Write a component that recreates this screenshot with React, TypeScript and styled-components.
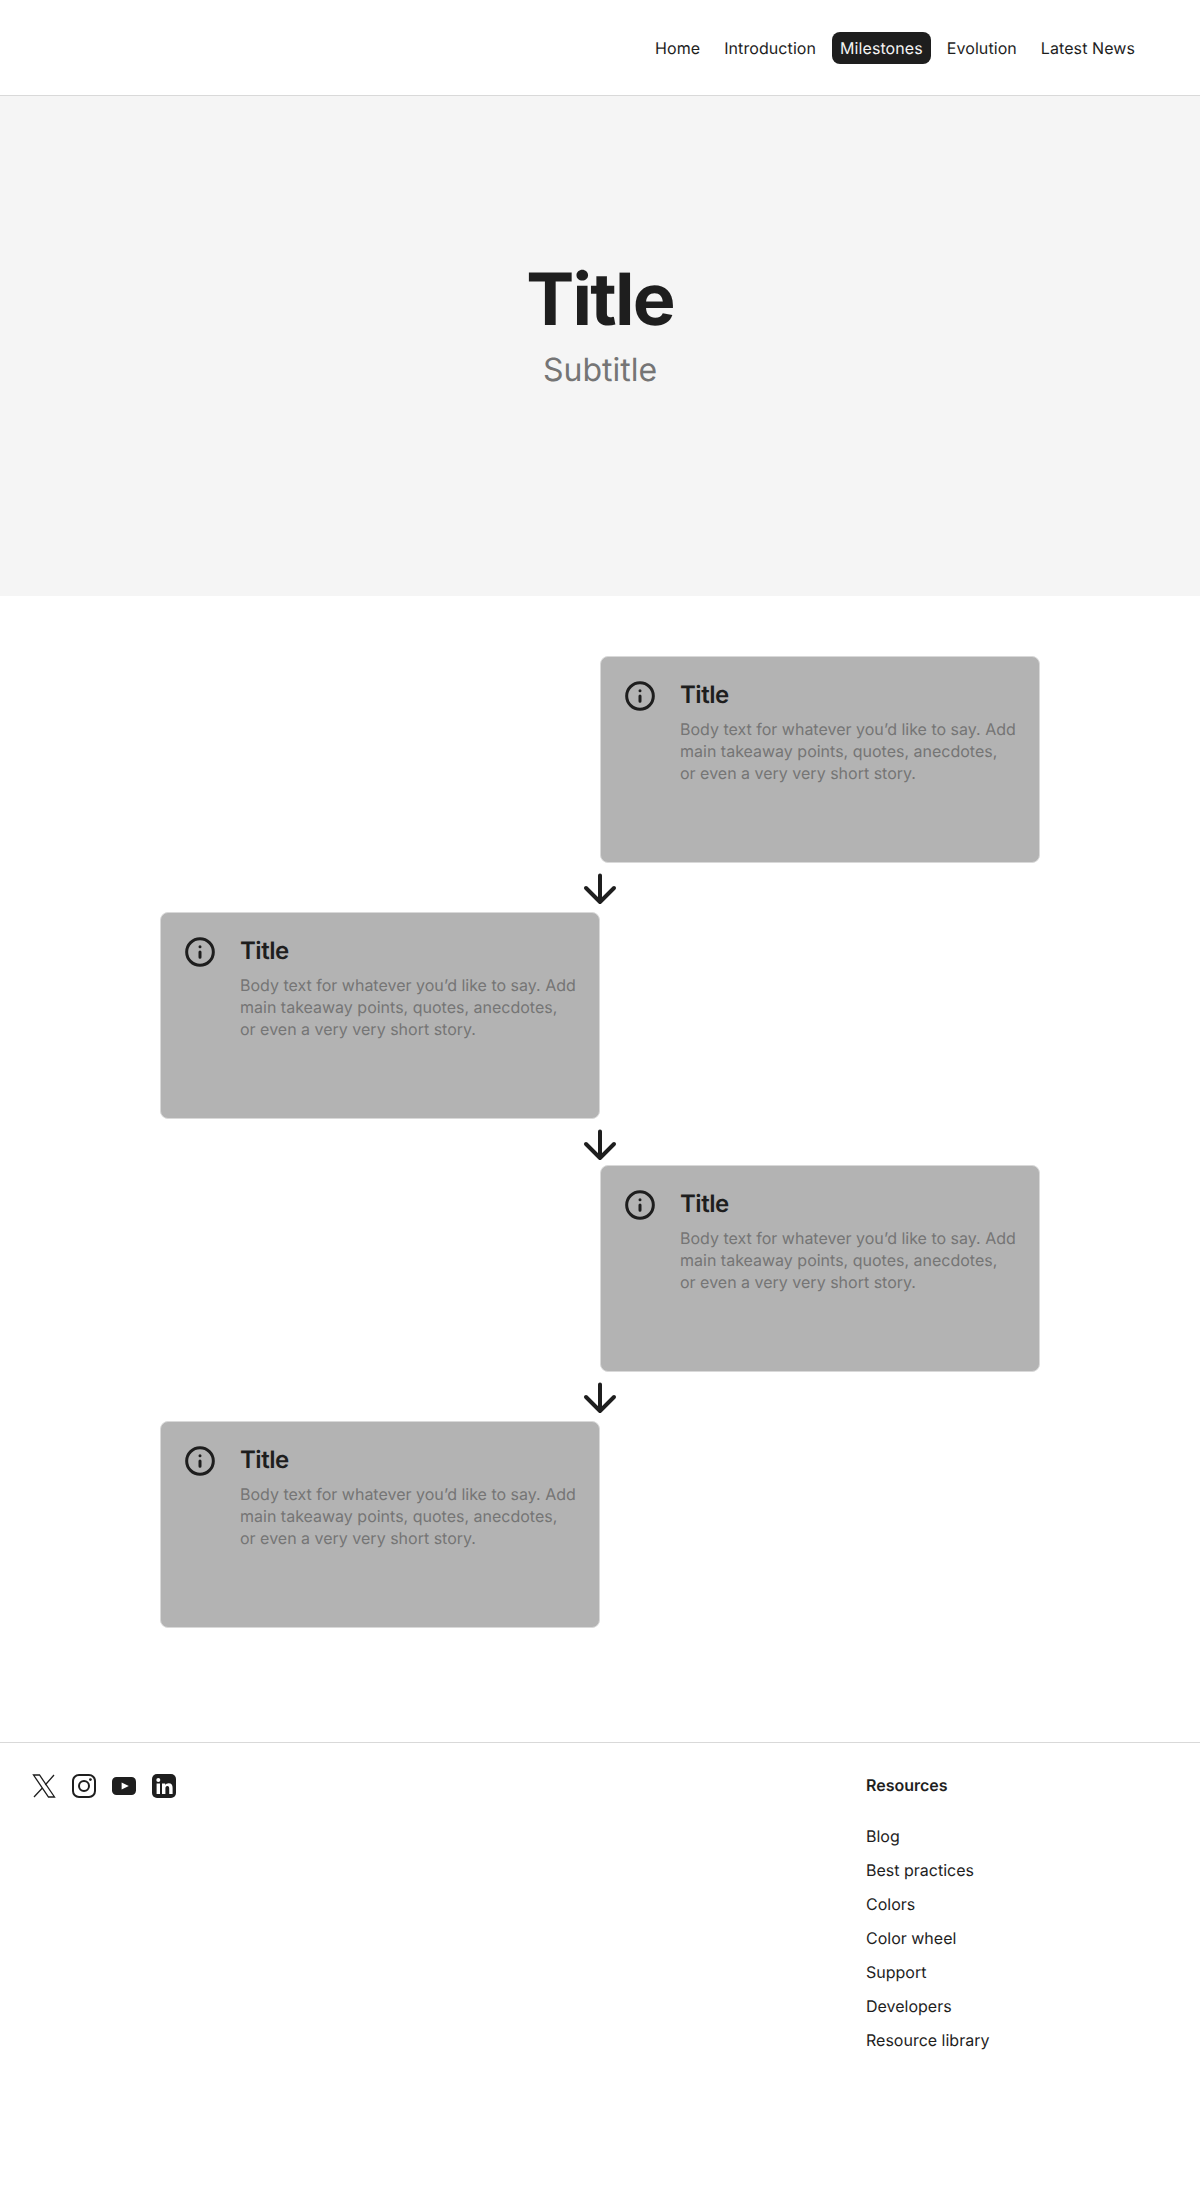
import React from "react";
import styled, { createGlobalStyle } from "styled-components";

const Global = createGlobalStyle`
  html, body { margin: 0; padding: 0; background: #fff; }
  body {
    font-family: Inter, "Liberation Sans", sans-serif;
    color: #1e1e1e;
    text-rendering: geometricPrecision;
    -webkit-font-smoothing: antialiased;
  }
  * { box-sizing: border-box; }
`;

const Page = styled.div`
  width: 1200px;
  min-height: 2210px;
  display: flex;
  flex-direction: column;
`;

const Header = styled.header`
  height: 96px;
  padding: 32px 57px 32px 32px;
  display: flex;
  justify-content: flex-end;
  align-items: flex-start;
  border-bottom: 1px solid #d9d9d9;
`;

const Nav = styled.nav`
  display: flex;
  gap: 8px;
`;

const NavLink = styled.a<{ $active?: boolean }>`
  height: 32px;
  padding: 8px;
  border-radius: 8px;
  font-size: 16px;
  line-height: 16px;
  letter-spacing: 0.08px;
  background: ${(p) => (p.$active ? "#1e1e1e" : "transparent")};
  color: ${(p) => (p.$active ? "#f5f5f5" : "#1e1e1e")};
`;

const Hero = styled.section`
  height: 500px;
  background: #f5f5f5;
  display: flex;
  flex-direction: column;
  align-items: center;
  justify-content: center;
  gap: 8px;
  padding-bottom: 46px;
`;

const HeroTitle = styled.h1`
  margin: 0;
  font-size: 72px;
  line-height: 86px;
  font-weight: 700;
  letter-spacing: -1.8px;
  color: #1e1e1e;
`;

const HeroSubtitle = styled.p`
  margin: 0;
  font-size: 32px;
  line-height: 38px;
  font-weight: 400;
  color: #757575;
`;

const Timeline = styled.section`
  padding: 60px 160px 114.5px;
  display: flex;
  flex-direction: column;
`;

const Row = styled.div<{ $right?: boolean }>`
  display: flex;
  justify-content: ${(p) => (p.$right ? "flex-end" : "flex-start")};
`;

const Card = styled.article`
  width: 440px;
  height: 206.5px;
  padding: 23px;
  display: flex;
  gap: 24px;
  background: #b3b3b3;
  border: 1px solid #d9d9d9;
  border-radius: 8px;
`;

const CardIcon = styled.svg`
  width: 32px;
  height: 32px;
  flex: none;
`;

const CardText = styled.div`
  display: flex;
  flex-direction: column;
  gap: 9px;
`;

const CardTitle = styled.h3`
  margin: 0;
  font-size: 24px;
  line-height: 29px;
  font-weight: 600;
  letter-spacing: -0.48px;
  color: #1e1e1e;
`;

const CardBody = styled.p`
  margin: 0;
  font-size: 16px;
  line-height: 22px;
  color: #757575;
`;

const ArrowWrap = styled.div<{ $gap: number }>`
  height: ${(p) => p.$gap}px;
  display: flex;
  justify-content: center;
  align-items: flex-start;
`;

const ArrowIcon = styled.svg`
  width: 48px;
  height: 48px;
  flex: none;
`;

const Footer = styled.footer`
  border-top: 1px solid #d9d9d9;
  padding: 31px 32px 32px;
  display: flex;
  justify-content: space-between;
  flex: 1;
`;

const Socials = styled.div`
  display: flex;
  gap: 16px;
  height: 24px;
`;

const SocialIcon = styled.svg`
  width: 24px;
  height: 24px;
`;

const Column = styled.div`
  width: 302px;
  display: flex;
  flex-direction: column;
  gap: 12px;
`;

const ColumnHeading = styled.div`
  font-size: 16px;
  line-height: 22px;
  font-weight: 600;
  padding-bottom: 17px;
  color: #1e1e1e;
`;

const ColumnLink = styled.a`
  font-size: 16px;
  line-height: 22px;
  color: #1e1e1e;
`;

const Info = () => (
  <CardIcon viewBox="0 0 32 32" fill="none" stroke="#1e1e1e" strokeWidth="3" strokeLinecap="round" strokeLinejoin="round">
    <circle cx="16" cy="16" r="13.33" />
    <path d="M16 21.33V16M16 10.67h.01" />
  </CardIcon>
);

const Arrow = () => (
  <ArrowIcon viewBox="0 0 48 48" fill="none" stroke="#1e1e1e" strokeWidth="4" strokeLinecap="round" strokeLinejoin="round">
    <path d="M24 12.500V39M38 25 24 39 10 25" />
  </ArrowIcon>
);

const XLogo = () => (
  <SocialIcon viewBox="0 0 24 24" fill="none" stroke="#1e1e1e" strokeWidth="1.3">
    <path d="M1.500 1h6l15 22h-6zM22 1 13.200 11M10.600 13.800 2 23" />
  </SocialIcon>
);

const Instagram = () => (
  <SocialIcon viewBox="0 0 24 24" fill="none" stroke="#1e1e1e" strokeWidth="2">
    <rect x="1" y="1" width="22" height="22" rx="6" />
    <circle cx="12" cy="12" r="5" />
    <circle cx="18.400" cy="5.600" r="1.400" fill="#1e1e1e" stroke="none" />
  </SocialIcon>
);

const YouTube = () => (
  <SocialIcon viewBox="0 0 24 24">
    <path fill="#1e1e1e" d="M4.500 3h15A4.500 4.500 0 0 1 24 7.500v9a4.500 4.500 0 0 1-4.500 4.500h-15A4.500 4.500 0 0 1 0 16.500v-9A4.500 4.500 0 0 1 4.500 3z" />
    <path fill="#fff" d="M9.600 8.400 16.800 12l-7.200 3.600z" />
  </SocialIcon>
);

const LinkedIn = () => (
  <SocialIcon viewBox="0 0 24 24">
    <rect width="24" height="24" rx="5" fill="#1e1e1e" />
    <circle cx="6.300" cy="6" r="2" fill="#fff" />
    <path fill="#fff" d="M4.600 9.500H8V20H4.600zM10 9.500h3.200v1.500c.6-1.100 1.900-1.800 3.400-1.800 3 0 4 1.900 4 4.800V20h-3.400v-5.500c0-1.400-.4-2.400-1.800-2.400s-2 1.100-2 2.500V20H10z" />
  </SocialIcon>
);

const links = ["Blog", "Best practices", "Colors", "Color wheel", "Support", "Developers", "Resource library"];
const navItems = ["Home", "Introduction", "Milestones", "Evolution", "Latest News"];
const arrowGaps = [49.5, 46.5, 49.5];

const TimelineCard = () => (
  <Card>
    <Info />
    <CardText>
      <CardTitle>Title</CardTitle>
      <CardBody>
        Body text for whatever you’d like to say. Add main takeaway points, quotes, anecdotes, or even a very very short story.
      </CardBody>
    </CardText>
  </Card>
);

export default function App() {
  return (
    <Page>
      <Global />
      <Header>
        <Nav>
          {navItems.map((n) => (
            <NavLink key={n} $active={n === "Milestones"}>{n}</NavLink>
          ))}
        </Nav>
      </Header>
      <Hero>
        <HeroTitle>Title</HeroTitle>
        <HeroSubtitle>Subtitle</HeroSubtitle>
      </Hero>
      <Timeline>
        {[true, false, true, false].map((right, i) => (
          <React.Fragment key={i}>
            <Row $right={right}>
              <TimelineCard />
            </Row>
            {i < 3 && (
              <ArrowWrap $gap={arrowGaps[i]}>
                <Arrow />
              </ArrowWrap>
            )}
          </React.Fragment>
        ))}
      </Timeline>
      <Footer>
        <Socials>
          <XLogo />
          <Instagram />
          <YouTube />
          <LinkedIn />
        </Socials>
        <Column>
          <ColumnHeading>Resources</ColumnHeading>
          {links.map((l) => (
            <ColumnLink key={l}>{l}</ColumnLink>
          ))}
        </Column>
      </Footer>
    </Page>
  );
}
